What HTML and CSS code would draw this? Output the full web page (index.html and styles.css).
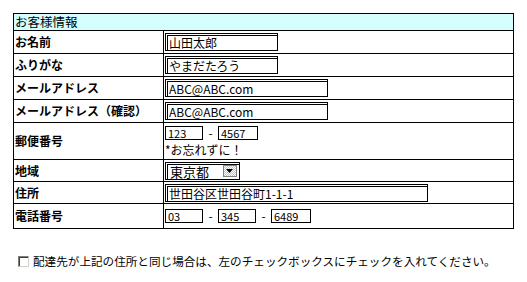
FILE: index.html
```html
<!DOCTYPE html>
<html lang="ja">
<head>
<meta charset="utf-8">
<link rel="stylesheet" href="styles.css">
</head>
<body>
<table class="form">
  <colgroup><col class="c1"><col class="c2"></colgroup>
  <tr class="head"><td colspan="2">お客様情報</td></tr>
  <tr class="r23"><th>お名前</th><td><span class="inp w113">山田太郎</span></td></tr>
  <tr class="r23"><th>ふりがな</th><td><span class="inp w113">やまだたろう</span></td></tr>
  <tr class="r23"><th>メールアドレス</th><td><span class="inp w163">ABC@ABC.com</span></td></tr>
  <tr class="r23"><th>メールアドレス（確認）</th><td><span class="inp w163">ABC@ABC.com</span></td></tr>
  <tr class="r37"><th>郵便番号</th><td>
    <div class="line"><span class="inp sm w38">123</span><span class="dash">-</span><span class="inp sm w40">4567</span></div>
    <div class="note">*お忘れずに！</div>
  </td></tr>
  <tr class="r22"><th>地域</th><td><span class="sel"><span class="selv">東京都</span><span class="selb"><svg width="8" height="5" viewBox="0 0 8 5"><path d="M0 0h7L3.5 4z" fill="#000"/></svg></span></span></td></tr>
  <tr class="r22"><th>住所</th><td><span class="inp w263">世田谷区世田谷町1-1-1</span></td></tr>
  <tr class="r25"><th>電話番号</th><td>
    <div class="line"><span class="inp sm w38">03</span><span class="dash">-</span><span class="inp sm w38">345</span><span class="dash">-</span><span class="inp sm w40">6489</span></div>
  </td></tr>
</table>
<div class="agree"><span class="cb"></span><span>配達先が上記の住所と同じ場合は、左のチェックボックスにチェックを入れてください。</span></div>
</body>
</html>
```
FILE: styles.css
```css
html, body { margin: 0; padding: 0; background: #fff; }
body { padding: 13px 0 0 13px; font-family: "Noto Sans CJK JP", "Noto Sans", sans-serif; font-size: 12px; color: #000; }
.form { border-collapse: collapse; width: 500px; table-layout: fixed; }
.c1 { width: 150px; }
.c2 { width: 350px; }
.form td, .form th { border: 1px solid #000; padding: 0 0 0 1px; text-align: left; vertical-align: middle; line-height: 14px; }
.form th { font-weight: bold; font-size: 12px; white-space: nowrap; }
.head td { background: #d4ffff; height: 16px; padding-left: 1px; font-size: 12.5px; }
.r23 th, .r23 td { height: 22px; }
.r37 th, .r37 td { height: 36px; }
.r22 th, .r22 td { height: 21px; }
.r25 th, .r25 td { height: 24px; }
.inp { display: inline-block; box-sizing: border-box; height: 18px; border: 1px solid #000; box-shadow: inset 1px 1px 0 #fff, inset 2px 2px 0 #000; padding: 1px 0 0 3px; font-family: "Noto Sans CJK JP", sans-serif; font-size: 12px; line-height: 15px; vertical-align: middle; white-space: nowrap; overflow: hidden; }
.inp.sm { height: 14px; font-size: 11px; line-height: 12px; padding-top: 0; padding-left: 2px; box-shadow: none; }
.w113 { width: 113px; }
.w163 { width: 163px; }
.w263 { width: 263px; }
.w38 { width: 38px; }
.w40 { width: 40px; }
.line { display: flex; align-items: center; height: 14px; }
.dash { width: 15px; text-align: center; font-size: 12px; line-height: 12px; }
.note { font-size: 12px; line-height: 14px; margin-top: 3px; }
.sel { display: inline-flex; box-sizing: border-box; width: 75px; height: 18px; border: 1px solid #000; box-shadow: inset 1px 1px 0 #fff, inset 2px 2px 0 #000; align-items: center; vertical-align: middle; padding: 1px 2px 0 4px; }
.selv { flex: 1; font-size: 13px; line-height: 15px; }
.selb { width: 14px; height: 12px; border: 1px solid #808080; box-sizing: border-box; background: repeating-conic-gradient(#c0c0c0 0 25%, #fff 0 50%) 0 0 / 2px 2px; display: flex; align-items: center; justify-content: center; }
.agree { display: flex; align-items: center; gap: 4px; margin: 24px 0 0 5px; font-size: 11.6px; }
.cb { width: 11px; height: 11px; box-sizing: border-box; border: 1px solid #808080; border-right-color: #d4d0c8; border-bottom-color: #d4d0c8; box-shadow: inset 1px 1px 0 #404040; background: #fff; }
```
